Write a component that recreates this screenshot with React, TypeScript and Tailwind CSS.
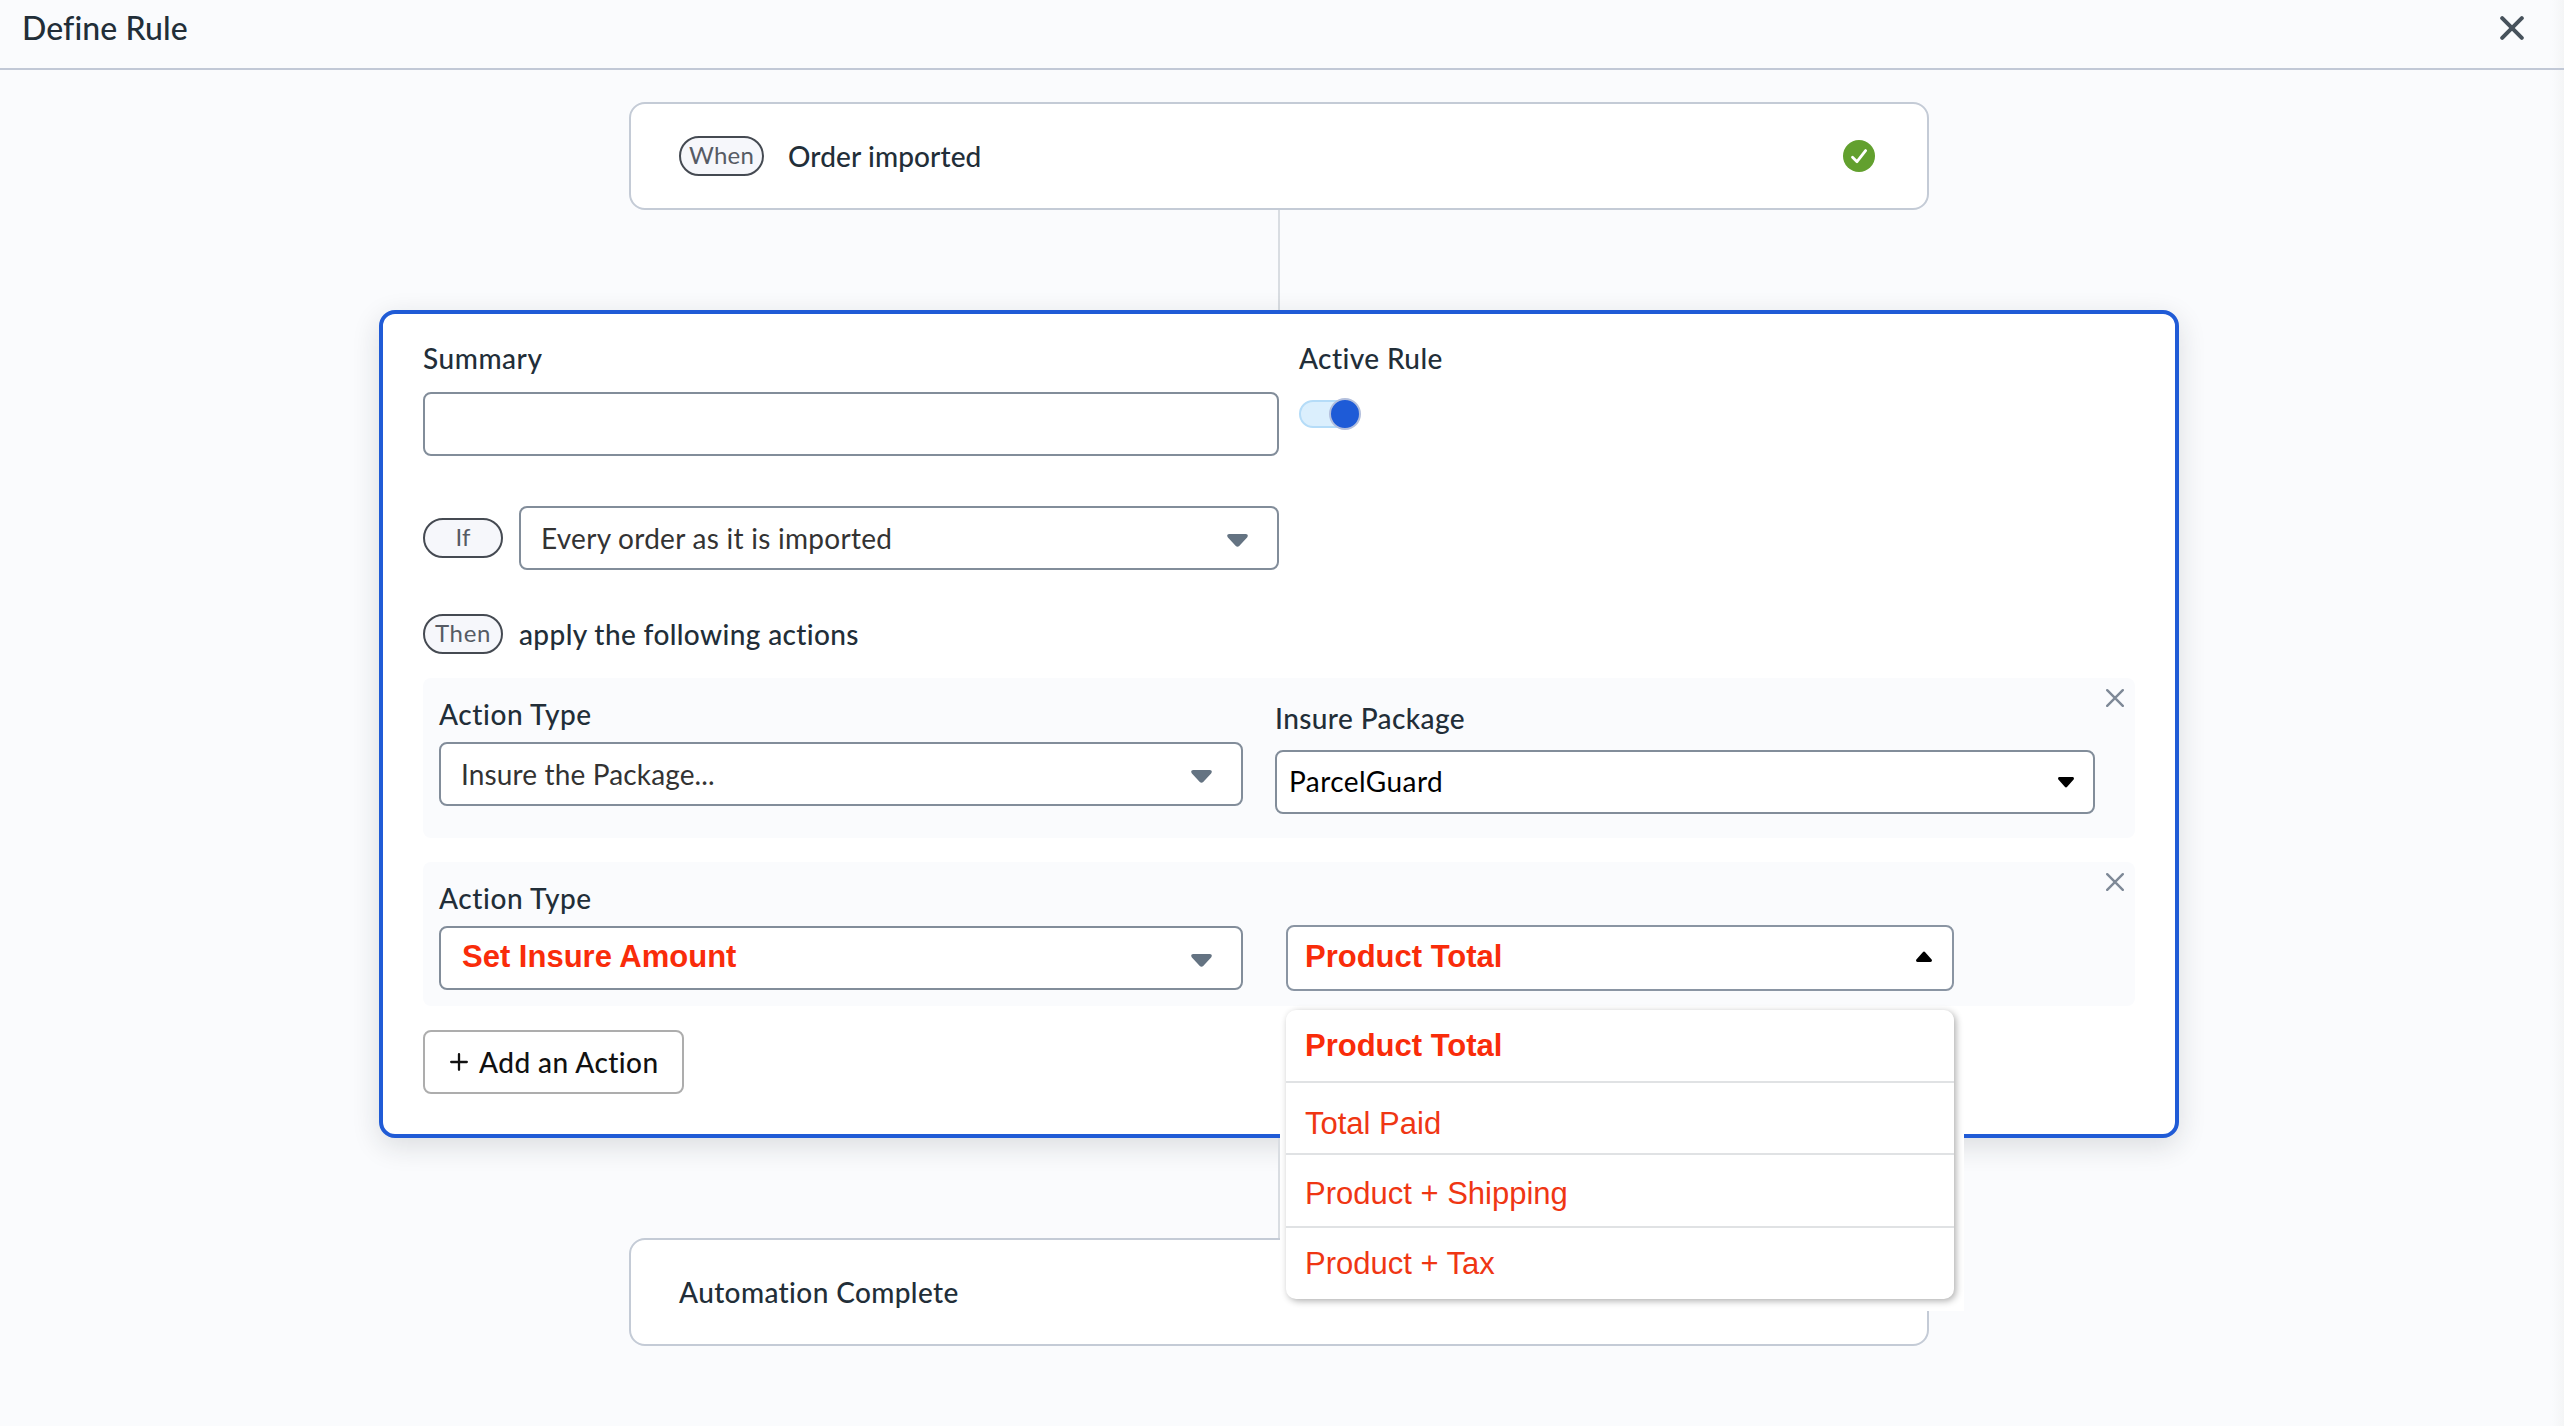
import type { ReactNode } from 'react'

export default function App() {
  return (
    <div className="flex h-[1426px] w-full flex-col overflow-hidden bg-[linear-gradient(to_left,#f4f5f6,#fafbfd_12px)] font-['Lato',sans-serif] text-[28px] leading-10 text-[#222e38]">
      <header className="flex h-[70px] shrink-0 items-start justify-between border-b-2 border-[#c1c8d6] pl-[22px] pr-10 pt-2">
        <h1 className="text-[32px] font-medium tracking-[0.08px]">Define Rule</h1>
        <button type="button" aria-label="Close" className="mt-2">
          <svg className="h-6 w-6" viewBox="0 0 24 24" fill="none" stroke="#47525c" strokeWidth="4" strokeLinecap="round">
            <path d="M2.2 2.2L21.8 21.8M21.8 2.2L2.2 21.8" />
          </svg>
        </button>
      </header>

      <main className="flex flex-col items-center pr-1.5 pt-8">
        <StepCard>
          <Pill className="w-[85px]">
            <span className="tracking-[0.2px]">When</span>
          </Pill>
          <span className="ml-6 font-medium tracking-[0.12px]">Order imported</span>
          <svg className="ml-auto mr-1 h-8 w-8" viewBox="0 0 32 32" fill="none">
            <circle cx="16" cy="16" r="16" fill="#62a02e" />
            <path d="M9.5 17.2L14 21.7L22.6 10.6" stroke="white" strokeWidth="2.8" strokeLinecap="round" strokeLinejoin="round" />
          </svg>
        </StepCard>

        <Connector />

        <section className="h-[828px] w-[1800px] rounded-2xl border-4 border-[#205bd6] bg-white px-10 pt-6 shadow-[0_8px_28px_rgba(30,35,40,0.14)]">
          <div className="flex gap-5">
            <div className="w-[856px]">
              <label className="block font-medium tracking-[0.55px]">Summary</label>
              <input type="text" className="mt-3.5 block h-16 w-full rounded-lg border-2 border-[#828d9a] bg-white px-6" />
            </div>
            <div>
              <label className="block font-medium tracking-[0.4px]">Active Rule</label>
              <Toggle />
            </div>
          </div>

          <div className="mt-[50px] flex items-center gap-4">
            <Pill className="w-20">If</Pill>
            <Select className="w-[760px] pl-5 pr-[29px] text-[#333333]">
              <span className="tracking-[0.27px]">Every order as it is imported</span>
            </Select>
          </div>

          <div className="mt-11 flex items-center gap-4">
            <Pill className="w-20">
              <span className="tracking-[0.7px]">Then</span>
            </Pill>
            <span className="font-medium tracking-[0.38px]">apply the following actions</span>
          </div>

          <div className="mt-6 flex h-40 items-start rounded-lg bg-[#fafbfd] pl-4 pr-[11px] pt-4">
            <div className="w-[804px]">
              <label className="block font-medium tracking-[0.6px]">Action Type</label>
              <Select className="mt-2 w-full pl-5 pr-[29px] text-[#333333]">
                <span className="tracking-[0.14px]">Insure the Package...</span>
              </Select>
            </div>
            <div className="ml-8 mt-1 w-[820px]">
              <label className="block font-medium tracking-[0.4px]">Insure Package</label>
              <div className="mt-3 flex h-16 items-center justify-between rounded-lg border-2 border-[#828d9a] bg-white pb-0.5 pl-3 pr-[19px] text-black">
                <span className="tracking-[0.45px]">ParcelGuard</span>
                <SmallCaret />
              </div>
            </div>
            <RemoveButton />
          </div>

          <div className="mt-6 flex h-36 items-start rounded-lg bg-[#fafbfd] pl-4 pr-[11px] pt-4">
            <div className="w-[804px]">
              <label className="block font-medium tracking-[0.6px]">Action Type</label>
              <Select className="mt-2 w-full pl-[21px] pr-[29px]">
                <span className="-mt-0.5 font-['Liberation_Sans',Arial,sans-serif] text-[31px] font-bold text-[#f92c0a]">
                  Set Insure Amount
                </span>
              </Select>
            </div>
            <div className="relative ml-[43px] mt-[47px] w-[668px]">
              <div className="flex h-[66px] items-center justify-between rounded-lg border-2 border-[#8a95a3] bg-white pb-0.5 pl-[17px] pr-5 font-['Liberation_Sans',Arial,sans-serif] text-[31px] font-bold text-[#f92c0a]">
                Product Total
                <SmallCaret className="-mt-px rotate-180" />
              </div>
              <AmountMenu />
            </div>
            <RemoveButton />
          </div>

          <button type="button" className="mt-6 flex h-16 w-[261px] items-center rounded-lg border-2 border-[#adadad] bg-white pl-[25px] text-[#111111]">
            <svg className="h-[18px] w-[18px]" viewBox="0 0 18 18" stroke="currentColor" strokeWidth="2.3" strokeLinecap="round">
              <path d="M9 1.2V16.8M1.2 9H16.8" />
            </svg>
            <span className="ml-[11px] font-medium tracking-[0.45px]">Add an Action</span>
          </button>
        </section>

        <Connector />

        <StepCard>
          <span className="font-medium tracking-[0.38px]">Automation Complete</span>
        </StepCard>
      </main>
    </div>
  )
}

function StepCard({ children }: { children: ReactNode }) {
  return (
    <div className="flex h-[108px] w-[1300px] items-center rounded-2xl border-2 border-[#c4cbd6] bg-white px-12">
      {children}
    </div>
  )
}

function Connector() {
  return <div className="h-[100px] w-0.5 bg-[#d9dde2]" />
}

function Pill({ className, children }: { className: string; children: ReactNode }) {
  return (
    <span className={`flex h-10 items-center justify-center rounded-full border-2 border-[#454a52] bg-[#f6f7fb] pb-0.5 text-2xl leading-8 text-[#565b64] ${className}`}>
      {children}
    </span>
  )
}

function Toggle() {
  return (
    <button type="button" role="switch" aria-checked="true" className="mt-[22px] flex h-7 w-[60px] items-center justify-end rounded-full border-2 border-[#b5dcf8] bg-[#dbeffd]">
      <span className="-mr-1 h-8 w-8 shrink-0 rounded-full border-2 border-[#b3bfdd] bg-[#1e5bd7]" />
    </button>
  )
}

function Select({ className, children }: { className: string; children: ReactNode }) {
  return (
    <div className={`flex h-16 items-center justify-between rounded-lg border-2 border-[#828d9a] bg-white ${className}`}>
      {children}
      <svg className="mt-1 h-[13px] w-[21px]" viewBox="0 0 21 13" fill="#647382">
        <path d="M2.2 0H18.8C20.8 0 21.4 2 20.1 3.4L12.2 12C11.2 13.1 9.8 13.1 8.8 12L0.9 3.4C-0.4 2 0.2 0 2.2 0Z" />
      </svg>
    </div>
  )
}

function SmallCaret({ className = 'mt-[3px]' }: { className?: string }) {
  return (
    <svg className={`h-[11px] w-4 ${className}`} viewBox="0 0 16 11" fill="black">
      <path d="M1.5 0H14.5C16 0 16.4 1.8 15.4 2.8L9.2 9.8C8.5 10.6 7.5 10.6 6.8 9.8L0.6 2.8C-0.4 1.8 0 0 1.5 0Z" />
    </svg>
  )
}

function RemoveButton() {
  return (
    <button type="button" aria-label="Remove action" className="-mt-[5px] ml-auto">
      <svg className="h-[18px] w-[18px]" viewBox="0 0 18 18" fill="none" stroke="#7e8997" strokeWidth="2.4" strokeLinecap="round">
        <path d="M1.2 1.2L16.8 16.8M16.8 1.2L1.2 16.8" />
      </svg>
    </button>
  )
}

function AmountMenu() {
  return (
    <div className="absolute -left-1.5 top-[81px] h-[305px] w-[684px] bg-white pl-1.5 pt-1">
      <ul className="flex h-[289px] w-[668px] flex-col rounded-[10px] bg-white font-['Liberation_Sans',Arial,sans-serif] text-[31px] text-[#ef3613] shadow-[2px_2px_7px_rgba(0,0,0,0.32)]">
        <li className="flex h-[73px] items-center border-b-2 border-[#e0e2e4] pl-[19px] pt-px font-bold text-[#f92c0a]">Product Total</li>
        <li className="flex h-[72px] items-center border-b-2 border-[#e0e2e4] pl-[19px] pt-[11px]">Total Paid</li>
        <li className="flex h-[73px] items-center border-b-2 border-[#e0e2e4] pl-[19px] pt-1.5">Product + Shipping</li>
        <li className="flex h-[71px] items-center pl-[19px]">Product + Tax</li>
      </ul>
    </div>
  )
}
